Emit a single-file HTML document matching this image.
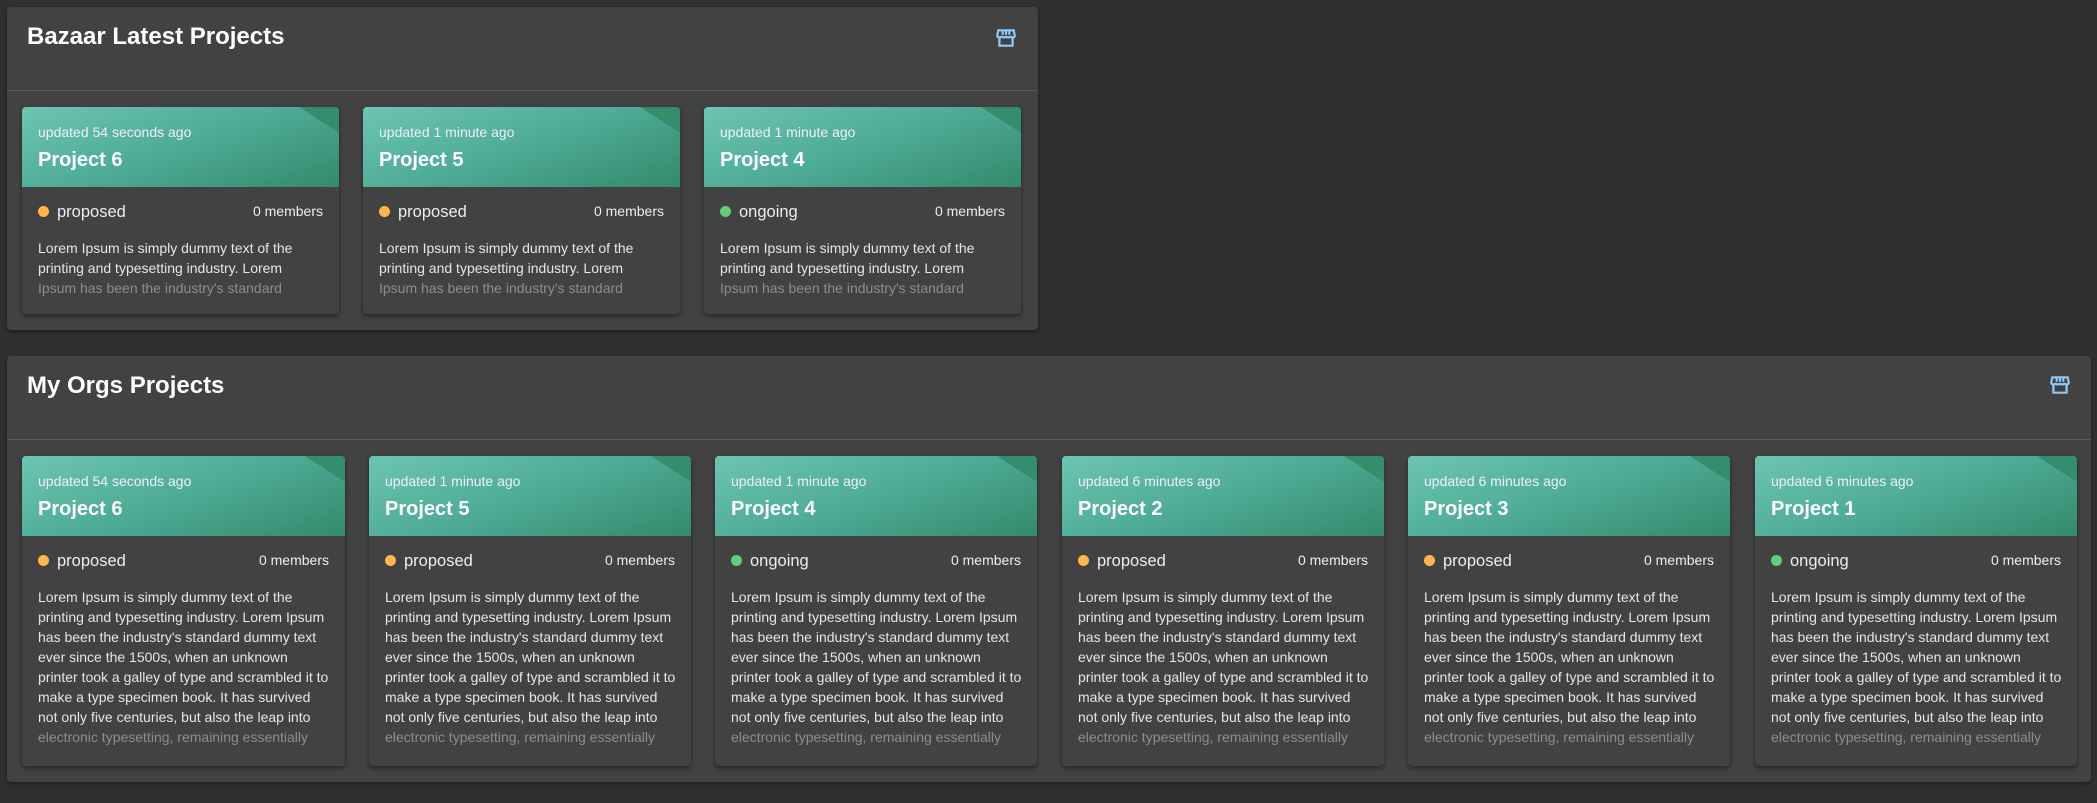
<!DOCTYPE html>
<html><head><meta charset="utf-8"><style>
*{box-sizing:border-box;margin:0;padding:0}
body{width:2097px;height:803px;background:#303030;font-family:"Liberation Sans",sans-serif;color:#fff;position:relative;overflow:hidden}
.panel{position:absolute;background:#424242;border-radius:4px;box-shadow:0 2px 4px rgba(0,0,0,.4)}
.panel h2{position:absolute;left:20px;top:16px;font-size:24px;font-weight:bold}
.panel .div{position:absolute;left:0;right:0;height:1px;background:#5a5a5a}
.ico{position:absolute;width:22px;height:22px}
.card{position:absolute;background:#424242;border-radius:4px;box-shadow:0 2px 5px rgba(0,0,0,.45);overflow:hidden}
.hd{position:relative;height:80px;background:linear-gradient(160deg,#6cc5b2 0%,#4eab95 50%,#348a6c 100%);padding-left:16px}
.hd:after{content:"";position:absolute;right:0;top:0;width:0;height:0;border-top:26px solid #348d6c;border-left:40px solid transparent}
.up{position:absolute;top:17px;font-size:14px;color:#f0f0f0}
.pt{position:absolute;top:42px;font-size:20px;font-weight:bold}
.st{position:absolute;left:16px;top:96px;font-size:16.5px;color:#eee}
.st i{display:inline-block;width:11px;height:11px;border-radius:50%;margin-right:8px;vertical-align:0}
.mem{position:absolute;right:16px;top:96px;font-size:14px;color:#eee}
.lo{position:absolute;left:16px;right:8px;top:131px;font-size:14px;line-height:20px;color:#e6e6e6;overflow:hidden;white-space:nowrap}
.lo span{color:#8d8d8d}
</style></head><body>
<div class="panel" style="left:7px;top:7px;width:1031px;height:323px">
<h2>Bazaar Latest Projects</h2>
<svg class="ico" style="left:988px;top:20px" viewBox="0 0 20 20" fill="none" stroke="#90caf9" stroke-width="2"><path d="M3 3h14l1 5c0 1-1 1.5-2 1.5s-2-.5-2-1.5c0 1-1 1.5-2 1.5s-2-.5-2-1.5c0 1-1 1.5-2 1.5s-2-.5-2-1.5c0 1-1 1.5-2 1.5S2 9 2 8z"/><path d="M4 10v7h12v-7"/><path d="M7 3v4M10 3v4M13 3v4"/></svg>
<div class="div" style="top:83px"></div>
</div>
<div class="panel" style="left:7px;top:356px;width:2084px;height:426px">
<h2>My Orgs Projects</h2>
<svg class="ico" style="left:2042px;top:18px" viewBox="0 0 20 20" fill="none" stroke="#90caf9" stroke-width="2"><path d="M3 3h14l1 5c0 1-1 1.5-2 1.5s-2-.5-2-1.5c0 1-1 1.5-2 1.5s-2-.5-2-1.5c0 1-1 1.5-2 1.5s-2-.5-2-1.5c0 1-1 1.5-2 1.5S2 9 2 8z"/><path d="M4 10v7h12v-7"/><path d="M7 3v4M10 3v4M13 3v4"/></svg>
<div class="div" style="top:83px"></div>
</div>

<div class="card" style="left:22px;top:107px;width:317px;height:207px"><div class="hd"><div class="up">updated 54 seconds ago</div><div class="pt">Project 6</div></div><div class="st"><i style="background:#ffb74d"></i>proposed</div><div class="mem">0 members</div><div class="lo" style="height:60px">Lorem Ipsum is simply dummy text of the<br>printing and typesetting industry. Lorem<br><span>Ipsum has been the industry's standard</span></div></div>
<div class="card" style="left:363px;top:107px;width:317px;height:207px"><div class="hd"><div class="up">updated 1 minute ago</div><div class="pt">Project 5</div></div><div class="st"><i style="background:#ffb74d"></i>proposed</div><div class="mem">0 members</div><div class="lo" style="height:60px">Lorem Ipsum is simply dummy text of the<br>printing and typesetting industry. Lorem<br><span>Ipsum has been the industry's standard</span></div></div>
<div class="card" style="left:704px;top:107px;width:317px;height:207px"><div class="hd"><div class="up">updated 1 minute ago</div><div class="pt">Project 4</div></div><div class="st"><i style="background:#66cc77"></i>ongoing</div><div class="mem">0 members</div><div class="lo" style="height:60px">Lorem Ipsum is simply dummy text of the<br>printing and typesetting industry. Lorem<br><span>Ipsum has been the industry's standard</span></div></div>

<div class="card" style="left:22px;top:456px;width:323px;height:310px"><div class="hd"><div class="up">updated 54 seconds ago</div><div class="pt">Project 6</div></div><div class="st"><i style="background:#ffb74d"></i>proposed</div><div class="mem">0 members</div><div class="lo" style="height:160px">Lorem Ipsum is simply dummy text of the<br>printing and typesetting industry. Lorem Ipsum<br>has been the industry's standard dummy text<br>ever since the 1500s, when an unknown<br>printer took a galley of type and scrambled it to<br>make a type specimen book. It has survived<br>not only five centuries, but also the leap into<br><span>electronic typesetting, remaining essentially</span></div></div>
<div class="card" style="left:369px;top:456px;width:322px;height:310px"><div class="hd"><div class="up">updated 1 minute ago</div><div class="pt">Project 5</div></div><div class="st"><i style="background:#ffb74d"></i>proposed</div><div class="mem">0 members</div><div class="lo" style="height:160px">Lorem Ipsum is simply dummy text of the<br>printing and typesetting industry. Lorem Ipsum<br>has been the industry's standard dummy text<br>ever since the 1500s, when an unknown<br>printer took a galley of type and scrambled it to<br>make a type specimen book. It has survived<br>not only five centuries, but also the leap into<br><span>electronic typesetting, remaining essentially</span></div></div>
<div class="card" style="left:715px;top:456px;width:322px;height:310px"><div class="hd"><div class="up">updated 1 minute ago</div><div class="pt">Project 4</div></div><div class="st"><i style="background:#66cc77"></i>ongoing</div><div class="mem">0 members</div><div class="lo" style="height:160px">Lorem Ipsum is simply dummy text of the<br>printing and typesetting industry. Lorem Ipsum<br>has been the industry's standard dummy text<br>ever since the 1500s, when an unknown<br>printer took a galley of type and scrambled it to<br>make a type specimen book. It has survived<br>not only five centuries, but also the leap into<br><span>electronic typesetting, remaining essentially</span></div></div>
<div class="card" style="left:1062px;top:456px;width:322px;height:310px"><div class="hd"><div class="up">updated 6 minutes ago</div><div class="pt">Project 2</div></div><div class="st"><i style="background:#ffb74d"></i>proposed</div><div class="mem">0 members</div><div class="lo" style="height:160px">Lorem Ipsum is simply dummy text of the<br>printing and typesetting industry. Lorem Ipsum<br>has been the industry's standard dummy text<br>ever since the 1500s, when an unknown<br>printer took a galley of type and scrambled it to<br>make a type specimen book. It has survived<br>not only five centuries, but also the leap into<br><span>electronic typesetting, remaining essentially</span></div></div>
<div class="card" style="left:1408px;top:456px;width:322px;height:310px"><div class="hd"><div class="up">updated 6 minutes ago</div><div class="pt">Project 3</div></div><div class="st"><i style="background:#ffb74d"></i>proposed</div><div class="mem">0 members</div><div class="lo" style="height:160px">Lorem Ipsum is simply dummy text of the<br>printing and typesetting industry. Lorem Ipsum<br>has been the industry's standard dummy text<br>ever since the 1500s, when an unknown<br>printer took a galley of type and scrambled it to<br>make a type specimen book. It has survived<br>not only five centuries, but also the leap into<br><span>electronic typesetting, remaining essentially</span></div></div>
<div class="card" style="left:1755px;top:456px;width:322px;height:310px"><div class="hd"><div class="up">updated 6 minutes ago</div><div class="pt">Project 1</div></div><div class="st"><i style="background:#66cc77"></i>ongoing</div><div class="mem">0 members</div><div class="lo" style="height:160px">Lorem Ipsum is simply dummy text of the<br>printing and typesetting industry. Lorem Ipsum<br>has been the industry's standard dummy text<br>ever since the 1500s, when an unknown<br>printer took a galley of type and scrambled it to<br>make a type specimen book. It has survived<br>not only five centuries, but also the leap into<br><span>electronic typesetting, remaining essentially</span></div></div>
</body></html>
